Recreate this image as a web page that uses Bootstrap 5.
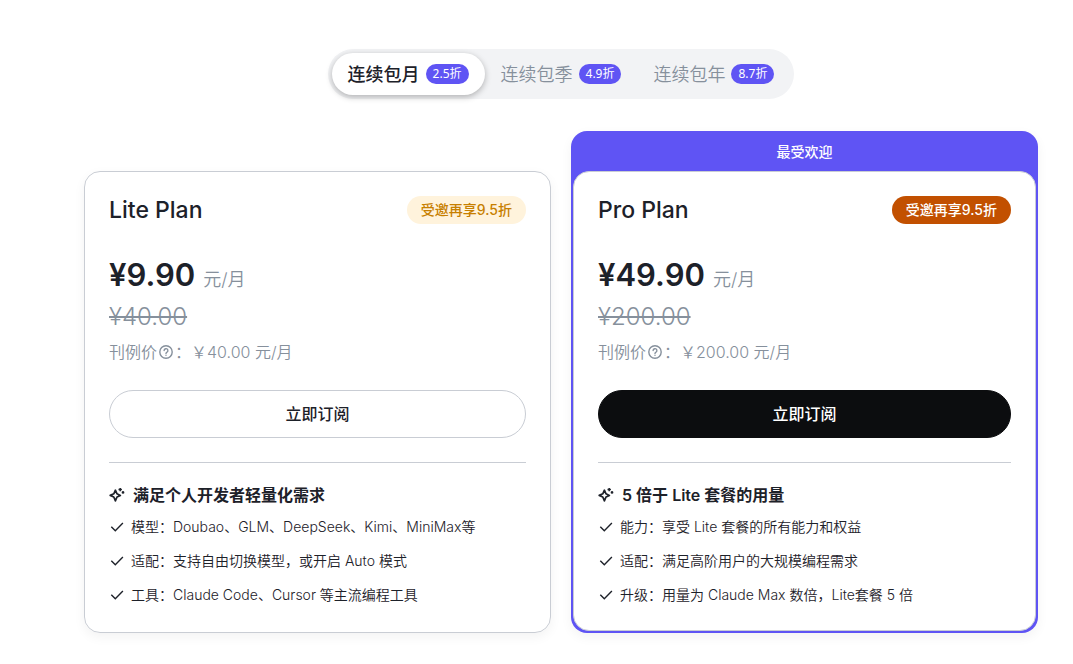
<!DOCTYPE html>
<html lang="zh-CN">
<head>
<meta charset="utf-8">
<meta name="viewport" content="width=device-width, initial-scale=1">
<title>套餐订阅</title>
<link href="https://cdn.jsdelivr.net/npm/bootstrap@5.3.0/dist/css/bootstrap.min.css" rel="stylesheet">
<style>
  body { font-family: Inter, "Noto Sans CJK SC", sans-serif; color: #1d2129; background: #fff; }
  .pricing { padding: 49px 35px 31px 84px; }
  .period-tabs { background: #f2f3f5; padding: 4px; }
  .period-tab { border: 0; background: transparent; color: #86909c; font-size: 18px; line-height: 26px; height: 42px; padding: 0 16px; gap: 6px; font-weight: 350; }
  .period-tab.active { background: #fff; color: #1d2129; font-weight: 500; box-shadow: 0 2px 6px rgba(0, 0, 0, .28); }
  .period-label { padding-top: 2px; }
  .discount { background: #5f54f4; color: #fff; font-family: "Noto Sans", "Noto Sans CJK SC", sans-serif; font-size: 12px; line-height: 20px; padding: 0 7px; font-weight: 400; }
  .plans { display: grid; grid-template-columns: repeat(auto-fit, minmax(340px, 1fr)); align-items: end; margin-top: 32px; gap: 20px; }
  .plan-outer { border-radius: 16px; box-shadow: 0 4px 12px rgba(0, 0, 0, .05); }
  .plan-outer.popular { background: #5f54f4; padding: 0 2px 2px; }
  .popular-label { color: #fff; font-size: 14px; line-height: 20px; padding: 11px 0 9px; font-weight: 500; }
  .plan { background: #fff; border: 1px solid #c9cdd4; border-radius: 16px; padding: 24px 24px 26px; }
  .popular .plan { padding-bottom: 24px; }
  .plan-title { font-size: 23px; line-height: 28px; font-weight: 500; }
  .invite { font-size: 14px; line-height: 28px; padding: 0 14px; background: #fff3dc; color: #c77f00; font-weight: 500; }
  .popular .invite { background: #c25000; color: #fff; }
  .price { font-size: 31px; line-height: 40px; font-weight: 600; }
  .price-row { margin-top: 31px; gap: 8px; }
  .unit { font-size: 18px; color: #86909c; font-weight: 350; }
  .old-price { font-size: 24px; line-height: 32px; margin-top: 6px; color: #86909c; font-weight: 350; }
  .list-price { font-size: 16px; line-height: 24px; margin-top: 7px; color: #86909c; font-weight: 350; }
  .list-price svg { margin: 0 1px; }
  .subscribe { height: 48px; margin-top: 26px; font-size: 16px; font-weight: 500; border: 1px solid #c9cdd4; background: #fff; color: #1d2129; }
  .popular .subscribe { background: #0c0d0f; border-color: #0c0d0f; color: #fff; }
  .divider { border: 0; border-top: 1px solid #c9cdd4; opacity: 1; margin: 24px 0 20px; }
  .feature-title { font-size: 16px; line-height: 24px; font-weight: 600; gap: 8px; }
  .features { font-size: 14px; line-height: 22px; margin-top: 9px; gap: 12px; font-weight: 350; }
  .features li { gap: 6px; }
  svg { fill: none; stroke: currentColor; flex: none; }
</style>
</head>
<body>
<main class="pricing">
  <div class="d-flex justify-content-center">
    <div class="period-tabs rounded-pill d-flex" role="tablist">
      <button type="button" role="tab" aria-selected="true" class="period-tab active rounded-pill d-flex align-items-center"><span class="period-label">连续包月</span><span class="discount rounded-pill">2.5折</span></button>
      <button type="button" role="tab" aria-selected="false" class="period-tab rounded-pill d-flex align-items-center"><span class="period-label">连续包季</span><span class="discount rounded-pill">4.9折</span></button>
      <button type="button" role="tab" aria-selected="false" class="period-tab rounded-pill d-flex align-items-center"><span class="period-label">连续包年</span><span class="discount rounded-pill">8.7折</span></button>
    </div>
  </div>

  <div class="plans">
    <div class="plan-outer">
      <section class="plan">
        <div class="d-flex justify-content-between align-items-center">
          <h2 class="plan-title m-0">Lite Plan</h2>
          <span class="invite rounded-pill">受邀再享9.5折</span>
        </div>
        <div class="price-row d-flex align-items-baseline"><span class="price">¥9.90</span><span class="unit">元/月</span></div>
        <div class="old-price"><del>¥40.00</del></div>
        <div class="list-price d-flex align-items-center">刊例价<svg width="16" height="16" viewBox="0 0 16 16" stroke-width="1.4" stroke-linecap="round"><circle cx="8" cy="8" r="6.2"/><path d="M6.1 6.6a1.9 1.9 0 1 1 2.7 1.7c-.6.3-.8.6-.8 1.1M8 11.1v.2"/></svg>：￥40.00 元/月</div>
        <button type="button" class="subscribe rounded-pill w-100">立即订阅</button>
        <hr class="divider">
        <h3 class="feature-title d-flex align-items-center m-0"><svg width="16" height="16" viewBox="0 0 16 16" stroke-width="1.7" stroke-linejoin="round"><path d="M6.4 3.2 8 6.8 11.4 8.4 8 10 6.4 13.8 4.8 10 1.2 8.4 4.8 6.8Z"/><path stroke-width="1.5" d="M11.2.9v3.4M9.5 2.6h3.4M14 4.1v2.6M12.7 5.4h2.6"/></svg>满足个人开发者轻量化需求</h3>
        <ul class="features list-unstyled d-flex flex-column mb-0">
          <li class="d-flex align-items-center"><svg width="16" height="16" viewBox="0 0 16 16" stroke-width="1.4"><path d="m2.3 7.7 4 4 7.6-7.6"/></svg>模型：Doubao、GLM、DeepSeek、Kimi、MiniMax等</li>
          <li class="d-flex align-items-center"><svg width="16" height="16" viewBox="0 0 16 16" stroke-width="1.4"><path d="m2.3 7.7 4 4 7.6-7.6"/></svg>适配：支持自由切换模型，或开启 Auto 模式</li>
          <li class="d-flex align-items-center"><svg width="16" height="16" viewBox="0 0 16 16" stroke-width="1.4"><path d="m2.3 7.7 4 4 7.6-7.6"/></svg>工具：Claude Code、Cursor 等主流编程工具</li>
        </ul>
      </section>
    </div>

    <div class="plan-outer popular">
      <div class="popular-label text-center">最受欢迎</div>
      <section class="plan">
        <div class="d-flex justify-content-between align-items-center">
          <h2 class="plan-title m-0">Pro Plan</h2>
          <span class="invite rounded-pill">受邀再享9.5折</span>
        </div>
        <div class="price-row d-flex align-items-baseline"><span class="price">¥49.90</span><span class="unit">元/月</span></div>
        <div class="old-price"><del>¥200.00</del></div>
        <div class="list-price d-flex align-items-center">刊例价<svg width="16" height="16" viewBox="0 0 16 16" stroke-width="1.4" stroke-linecap="round"><circle cx="8" cy="8" r="6.2"/><path d="M6.1 6.6a1.9 1.9 0 1 1 2.7 1.7c-.6.3-.8.6-.8 1.1M8 11.1v.2"/></svg>：￥200.00 元/月</div>
        <button type="button" class="subscribe rounded-pill w-100">立即订阅</button>
        <hr class="divider">
        <h3 class="feature-title d-flex align-items-center m-0"><svg width="16" height="16" viewBox="0 0 16 16" stroke-width="1.7" stroke-linejoin="round"><path d="M6.4 3.2 8 6.8 11.4 8.4 8 10 6.4 13.8 4.8 10 1.2 8.4 4.8 6.8Z"/><path stroke-width="1.5" d="M11.2.9v3.4M9.5 2.6h3.4M14 4.1v2.6M12.7 5.4h2.6"/></svg>5 倍于 Lite 套餐的用量</h3>
        <ul class="features list-unstyled d-flex flex-column mb-0">
          <li class="d-flex align-items-center"><svg width="16" height="16" viewBox="0 0 16 16" stroke-width="1.4"><path d="m2.3 7.7 4 4 7.6-7.6"/></svg>能力：享受 Lite 套餐的所有能力和权益</li>
          <li class="d-flex align-items-center"><svg width="16" height="16" viewBox="0 0 16 16" stroke-width="1.4"><path d="m2.3 7.7 4 4 7.6-7.6"/></svg>适配：满足高阶用户的大规模编程需求</li>
          <li class="d-flex align-items-center"><svg width="16" height="16" viewBox="0 0 16 16" stroke-width="1.4"><path d="m2.3 7.7 4 4 7.6-7.6"/></svg>升级：用量为 Claude Max 数倍，Lite套餐 5 倍</li>
        </ul>
      </section>
    </div>
  </div>
</main>
<script src="https://cdn.jsdelivr.net/npm/bootstrap@5.3.0/dist/js/bootstrap.bundle.min.js"></script>
</body>
</html>
